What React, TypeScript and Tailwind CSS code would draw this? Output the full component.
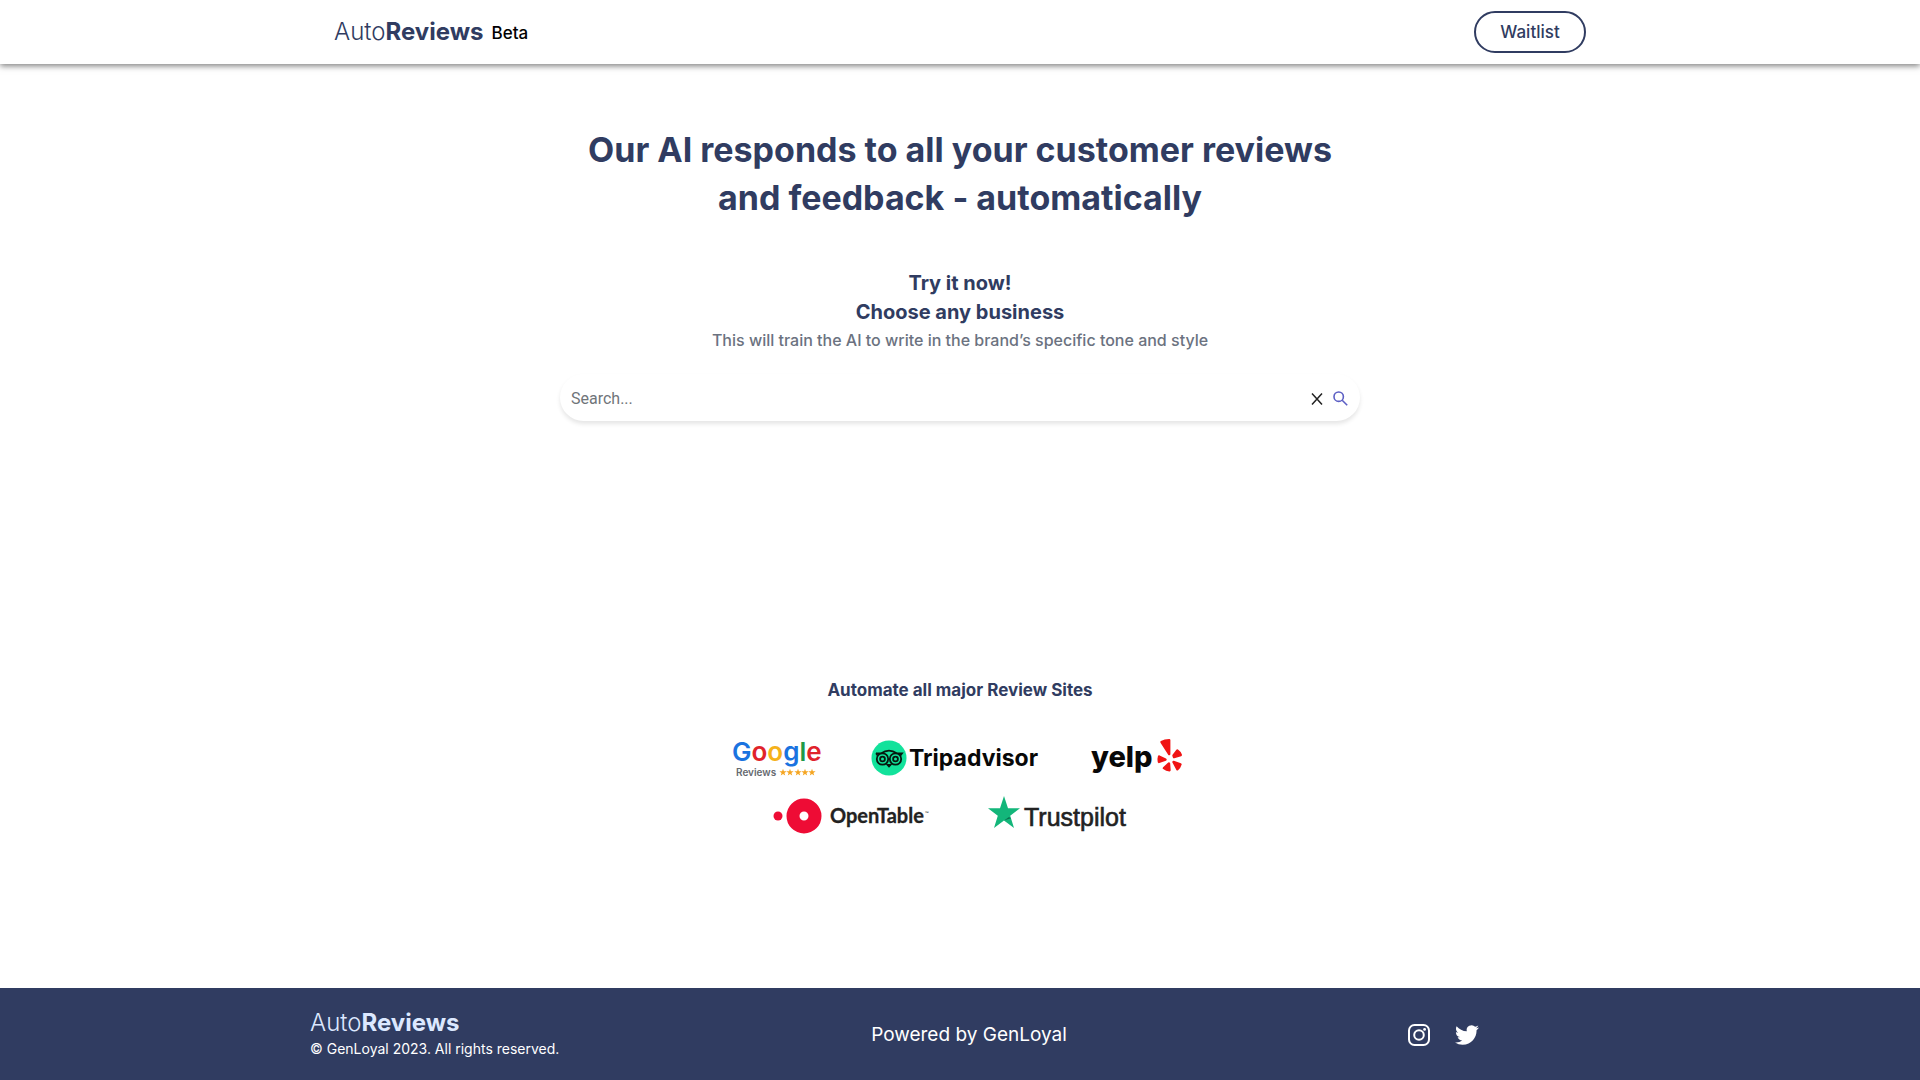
import React from "react";

function Brand({ className }: { className: string }) {
  return (
    <span className={`text-2xl leading-8 font-light ${className}`}>
      Auto<span className="font-bold">Reviews</span>
    </span>
  );
}

const star = "M0 -10 L2.4 -3.2 L9.5 -3.1 L3.8 1.2 L5.9 8.1 L0 4 L-5.9 8.1 L-3.8 1.2 L-9.5 -3.1 L-2.4 -3.2 Z";

function GoogleReviews() {
  return (
    <svg width="92" height="44" viewBox="0 0 92 44" role="img" aria-label="Google Reviews">
      <text x="0" y="25" fontFamily="Inter, sans-serif" fontSize="26" fontWeight="600">
        <tspan fill="#1a73e0">G</tspan>
        <tspan fill="#e0232b">o</tspan>
        <tspan fill="#f5b21a">o</tspan>
        <tspan fill="#1a73e0">g</tspan>
        <tspan fill="#1e9a48">l</tspan>
        <tspan fill="#e0232b">e</tspan>
      </text>
      <text x="4" y="40" fontFamily="Inter, sans-serif" fontSize="10" fontWeight="600" fill="#666a70">Reviews</text>
      {[51, 58, 66, 73, 80].map((x) => (
        <path key={x} d={star} transform={`translate(${x} 36.500) scale(.38)`} fill="#f5a623" />
      ))}
    </svg>
  );
}

function Tripadvisor() {
  return (
    <svg width="172" height="44" viewBox="0 0 172 44" role="img" aria-label="Tripadvisor">
      <circle cx="18" cy="22" r="17.500" fill="#12e29b" />
      <path d="M5 17.300h5.500C15 13.600 21 13.600 25.500 17.300H31l-1.800 2.500" fill="none" stroke="#07170f" strokeWidth="1.800" />
      <path d="M5 17.300l1.800 2.500M15.500 28L18 30.500l2.500-2.500" fill="#07170f" stroke="#07170f" strokeWidth="1.600" />
      {[11.5, 24.5].map((x) => (
        <g key={x}>
          <circle cx={x} cy="23" r="5.700" fill="#12e29b" stroke="#07170f" strokeWidth="1.800" />
          <circle cx={x} cy="23" r="2.400" fill="#12e29b" stroke="#07170f" strokeWidth="1.800" />
        </g>
      ))}
      <text x="38" y="30" fontFamily="Inter, sans-serif" fontSize="23" fontWeight="700" fill="#080808">Tripadvisor</text>
    </svg>
  );
}

function Yelp() {
  return (
    <svg width="96" height="44" viewBox="0 0 96 44" role="img" aria-label="Yelp">
      <text x="1" y="31" fontFamily="Inter, sans-serif" fontSize="29" fontWeight="800" fill="#080808">yelp</text>
      <g fill="#f01414" stroke="#f01414" strokeWidth="2.400" strokeLinejoin="round">
        <path d="M71.500 6c2.200-1.300 4.800-1.900 7.700-1.900V18Z" />
        <path d="M83.500 19.500l3.800-5c1.700 1.200 2.900 2.700 3.500 4.500L84 21Z" />
        <path d="M83.500 26l7 2.300c-.5 2-1.600 3.600-3.200 4.900Z" />
        <path d="M79 27.500l.5 6.800c-2.200-.2-4-1-5.600-2.200Z" />
        <path d="M75.500 23.500l-6.600 2.400c-.4-1.800-.4-3.600.2-5.400Z" />
      </g>
    </svg>
  );
}

function OpenTable() {
  return (
    <svg width="158" height="40" viewBox="0 0 158 40" role="img" aria-label="OpenTable">
      <circle cx="5" cy="20" r="4.500" fill="#ee0c35" />
      <circle cx="31" cy="20" r="11" fill="none" stroke="#ee0c35" strokeWidth="13" />
      <text x="57" y="27" fontFamily="Lato, sans-serif" fontSize="20" fontWeight="700" fill="#222" stroke="#222" strokeWidth=".3">
        OpenTable
      </text>
      <text x="152" y="19" fontFamily="Lato, sans-serif" fontSize="5" fill="#222">™</text>
    </svg>
  );
}

function Trustpilot() {
  return (
    <svg width="142" height="40" viewBox="0 0 142 40" role="img" aria-label="Trustpilot">
      <path d="M17 0l4 12.200h12L23.200 19.700 27 32l-10-7.500L7 32l3.800-12.300L1 12.200h12Z" fill="#13b67a" />
      <path d="M24 22.300l-7 2.200 5-3.500Z" fill="#0a7350" />
      <text x="37" y="30" fontFamily="Liberation Sans, sans-serif" fontSize="25" fill="#222" stroke="#222" strokeWidth=".6">Trustpilot</text>
    </svg>
  );
}

export default function App() {
  return (
    <div className="flex min-h-screen flex-col bg-white font-['Inter',sans-serif] text-[#303c61]">
      <header className="relative h-16 shadow-[0_2px_6px_rgba(0,0,0,0.5)]">
        <div className="mx-auto flex h-full max-w-[1252px] items-center justify-between">
          <a href="#" className="flex items-center gap-2">
            <Brand className="text-[#303c61]" />
            <span className="pt-1 text-[17px] font-medium text-black">Beta</span>
          </a>
          <button className="h-[42px] w-28 rounded-full border-2 border-[#303c61] text-[17px] leading-6 font-medium">
            Waitlist
          </button>
        </div>
      </header>

      <main className="flex flex-1 flex-col items-center px-4 text-center">
        <h1 className="mt-[62px] max-w-[800px] text-[34px] leading-12 font-bold">
          Our AI responds to all your customer reviews
          <br />
          and feedback - automatically
        </h1>
        <h2 className="mt-[47px] text-[20px] leading-[29px] font-bold">
          Try it now!
          <br />
          Choose any business
        </h2>
        <p className="text-base leading-[26px] font-medium text-[#6b7280]">
          This will train the AI to write in the brand’s specific tone and style
        </p>
        <form
          role="search"
          className="mt-[21px] flex h-[47px] w-full max-w-[800px] items-center rounded-3xl pt-0.5 pr-3 pl-[11px] shadow-[0_3px_4px_rgba(0,0,0,0.1)]"
          onSubmit={(e) => e.preventDefault()}
        >
          <input
            type="text"
            aria-label="Search"
            placeholder="Search..."
            className="min-w-0 flex-1 font-['Roboto',sans-serif] text-base outline-none placeholder:text-[#70757a]"
          />
          <button type="reset" aria-label="Clear" className="mr-2.5">
            <svg width="12" height="14" viewBox="0 0 12 14" fill="none" stroke="#222" strokeWidth="1.500">
              <path d="M1 1.500l10 11M11 1.500l-10 11" />
            </svg>
          </button>
          <button type="submit" aria-label="Submit search">
            <svg width="15" height="15" viewBox="0 0 15 15" fill="none" stroke="#5c5fc4" strokeWidth="1.600">
              <circle cx="5.700" cy="5.700" r="4.700" />
              <path d="M9.200 9.200l5 5" />
            </svg>
          </button>
        </form>

        <section className="mt-[257px] flex flex-col items-center">
          <h3 className="text-[17px] leading-6 font-bold">Automate all major Review Sites</h3>
          <div className="mt-[34px] mr-0.5 flex items-center gap-[47px]">
            <GoogleReviews />
            <Tripadvisor />
            <Yelp />
          </div>
          <div className="mt-4 mr-[18px] flex items-center gap-14">
            <OpenTable />
            <Trustpilot />
          </div>
        </section>
      </main>

      <footer className="h-[92px] bg-[#303c61] text-white">
        <div className="mx-auto grid h-full max-w-[1300px] grid-cols-3 items-center">
          <div className="flex flex-col pb-0.5">
            <Brand className="text-[#dce8ff]" />
            <p className="text-sm">© GenLoyal 2023. All rights reserved.</p>
          </div>
          <p className="pt-0.5 pl-[18px] text-center text-[19px]">
            Powered by <a href="#">GenLoyal</a>
          </p>
          <div className="flex justify-end gap-6 pt-0.5 pr-[131px]">
            <a href="#" aria-label="Instagram">
              <svg width="24" height="24" viewBox="0 0 24 24" fill="none" stroke="white" strokeWidth="2">
                <rect x="2" y="2" width="20" height="20" rx="5.500" />
                <circle cx="12" cy="12" r="4.800" />
                <circle cx="17.600" cy="6.400" r="1.400" fill="white" stroke="none" />
              </svg>
            </a>
            <a href="#" aria-label="Twitter">
              <svg width="24" height="24" viewBox="0 0 24 24" fill="white">
                <path d="M23.953 4.570a10 10 0 0 1-2.825.775 4.958 4.958 0 0 0 2.163-2.723c-.951.555-2.005.959-3.127 1.184a4.920 4.920 0 0 0-8.384 4.482C7.690 8.095 4.067 6.130 1.640 3.162a4.822 4.822 0 0 0-.666 2.475c0 1.710.870 3.213 2.188 4.096a4.904 4.904 0 0 1-2.228-.616v.060a4.923 4.923 0 0 0 3.946 4.827 4.996 4.996 0 0 1-2.212.085 4.936 4.936 0 0 0 4.604 3.417 9.867 9.867 0 0 1-6.102 2.105c-.390 0-.779-.023-1.170-.067a13.995 13.995 0 0 0 7.557 2.209c9.053 0 13.998-7.496 13.998-13.985 0-.210 0-.420-.015-.630A9.935 9.935 0 0 0 24 4.590Z" />
              </svg>
            </a>
          </div>
        </div>
      </footer>
    </div>
  );
}
